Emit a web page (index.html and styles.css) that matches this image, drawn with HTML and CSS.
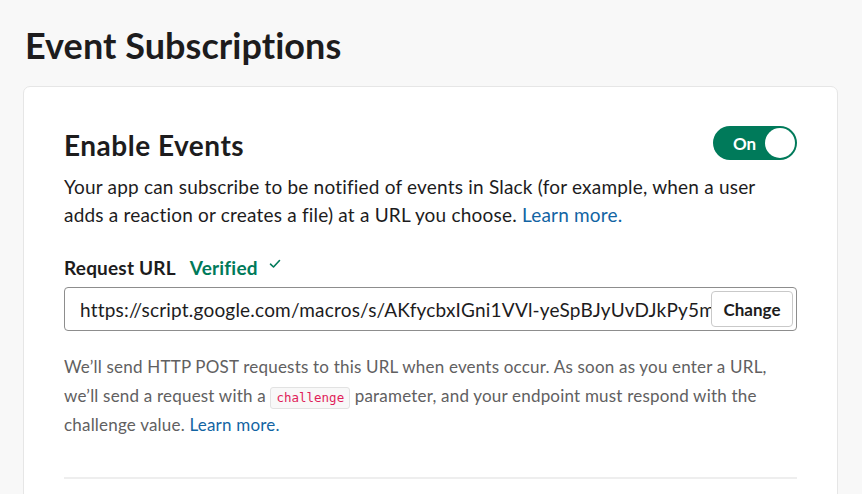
FILE: index.html
```html
<!DOCTYPE html>
<html>
<head>
<meta charset="utf-8">
<link rel="stylesheet" href="styles.css">
</head>
<body>
<div class="page">
  <h1 class="title">Event Subscriptions</h1>
  <div class="card">
    <div class="head-row">
      <h2 class="sub">Enable Events</h2>
      <div class="toggle"><span class="toggle-label">On</span><span class="knob"></span></div>
    </div>
    <p class="desc">Your app can subscribe to be notified of events in Slack (for example, when a user adds a reaction or creates a file) at a URL you choose. <a class="link">Learn more.</a></p>
    <div class="label-row">
      <span class="label">Request URL</span>
      <span class="verified">Verified</span>
      <svg class="check" width="12" height="10" viewBox="0 0 12 10"><path d="M1.5 5.2 L4.5 8 L10.5 1.5" fill="none" stroke="#007a5a" stroke-width="1.6" stroke-linecap="round" stroke-linejoin="round"/></svg>
    </div>
    <div class="input">
      <span class="input-text">https://script.google.com/macros/s/AKfycbxIGni1VVl-yeSpBJyUvDJkPy5mXhGqT2wLuM</span>
      <button class="change">Change</button>
    </div>
    <p class="help">We’ll send HTTP POST requests to this URL when events occur. As soon as you enter a URL, we’ll send a request with a <code class="code">challenge</code> parameter, and your endpoint must respond with the challenge value. <a class="link">Learn more.</a></p>
    <div class="divider"></div>
  </div>
</div>
</body>
</html>
```
FILE: styles.css
```css
html, body {
  margin: 0;
  padding: 0;
  background: #f8f8f8;
  font-family: Lato, "Noto Sans", sans-serif;
  color: #1d1c1d;
  overflow: hidden;
  height: 494px;
}
.page {
  padding: 0 24px 0 23px;
  width: 815px;
}
.title {
  margin: 0;
  padding-top: 20px;
  font-size: 36px;
  font-weight: 700;
  line-height: 50px;
  letter-spacing: 0.05px;
  height: 66px;
  padding-left: 2px;
}
.card {
  background: #fff;
  border: 1px solid #e6e6e6;
  border-radius: 7px;
  padding: 26px 40px 0 40px;
  height: 420px;
  box-sizing: border-box;
}
.head-row {
  display: flex;
  justify-content: space-between;
  align-items: center;
  height: 60px;
}
.sub {
  margin: 0;
  font-size: 28px;
  font-weight: 700;
  line-height: 36px;
  letter-spacing: 0.5px;
  margin-top: 4px;
}
.toggle {
  width: 84px;
  height: 34px;
  background: #007a5a;
  border-radius: 17px;
  display: flex;
  align-items: center;
  box-sizing: border-box;
  padding: 0 2px 0 20px;
  justify-content: space-between;
}
.toggle-label {
  color: #fff;
  font-weight: 700;
  font-size: 17px;
}
.knob {
  width: 30px;
  height: 30px;
  border-radius: 50%;
  background: #fff;
}
.desc {
  margin: 0;
  font-size: 19px;
  letter-spacing: 0.2px;
  line-height: 28px;
  margin-top: 0px;
}
.link {
  color: #1264a3;
}
.label-row {
  display: flex;
  align-items: center;
  margin-top: 25px;
  height: 26px;
}
.label {
  font-weight: 700;
  font-size: 19px;
  letter-spacing: 0.2px;
}
.verified {
  color: #007a5a;
  font-weight: 700;
  font-size: 19px;
  letter-spacing: 0.2px;
  margin-left: 14px;
}
.check {
  margin-left: 11px;
  margin-top: -6px;
}
.input {
  margin-top: 7px;
  height: 44px;
  border: 1px solid #8d8d8d;
  border-radius: 4px;
  box-sizing: border-box;
  display: flex;
  align-items: center;
  padding: 0 3px 0 15px;
  overflow: hidden;
}
.input-text {
  flex: 1;
  white-space: nowrap;
  overflow: hidden;
  font-size: 19px;
  letter-spacing: 0.2px;
  color: #1d1c1d;
}
.change {
  flex: none;
  height: 36px;
  width: 82px;
  border: 1px solid #c9c9c9;
  border-radius: 4px;
  background: #fff;
  font-family: Lato, sans-serif;
  font-weight: 700;
  font-size: 17px;
  color: #1d1c1d;
  padding: 0;
}
.help {
  margin: 0;
  margin-top: 21px;
  font-size: 17px;
  letter-spacing: 0.2px;
  line-height: 29px;
  color: #616061;
}
.code {
  display: inline-block;
  font-family: "DejaVu Sans Mono", monospace;
  font-size: 12.5px;
  letter-spacing: 0;
  line-height: 20px;
  color: #e01e5a;
  background: #f8f8f8;
  border: 1px solid #e2e2e2;
  border-radius: 3px;
  padding: 0 5px;
  vertical-align: 0px;
}
.divider {
  margin-top: 38px;
  height: 2px;
  background: #eeeeee;
}
```
